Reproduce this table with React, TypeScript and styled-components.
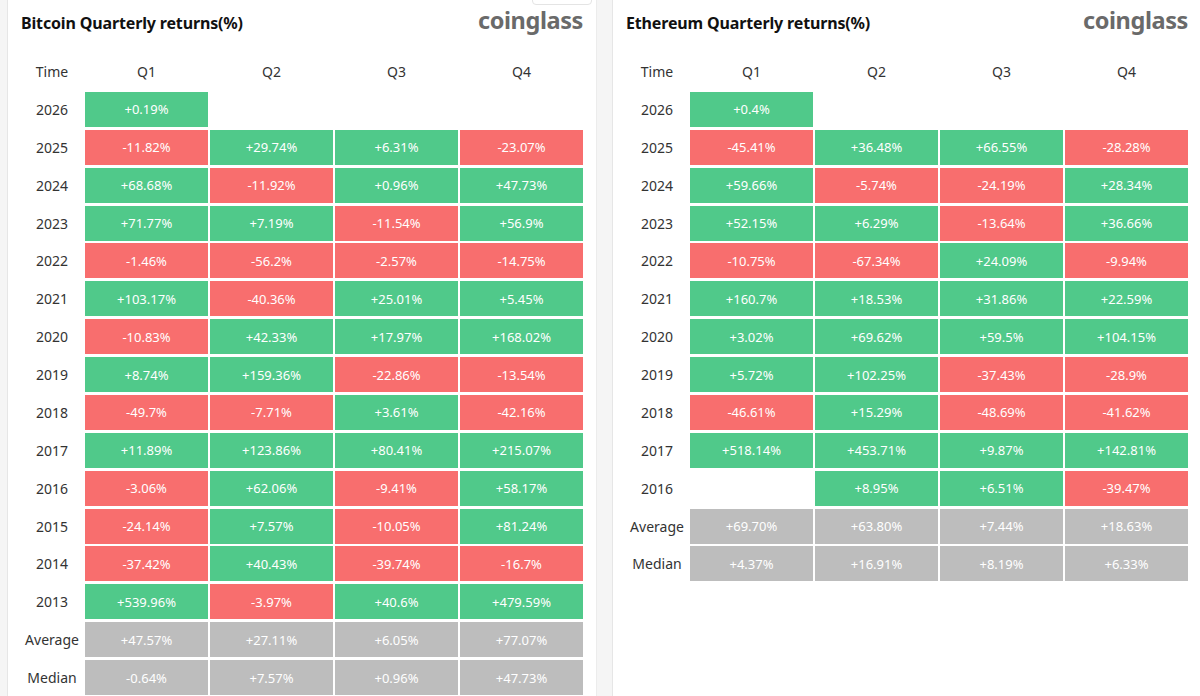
import React from "react";
import styled, { createGlobalStyle } from "styled-components";

const Global = createGlobalStyle`
  html, body { margin: 0; padding: 0; height: 100%; overflow: hidden; background: #f5f5f5; }
  #root { height: 100%; }
`;

type Row = { label: string; values: (string | null)[]; summary?: boolean };

const btc: Row[] = [
  { label: "2026", values: ["+0.19%", null, null, null] },
  { label: "2025", values: ["-11.82%", "+29.74%", "+6.31%", "-23.07%"] },
  { label: "2024", values: ["+68.68%", "-11.92%", "+0.96%", "+47.73%"] },
  { label: "2023", values: ["+71.77%", "+7.19%", "-11.54%", "+56.9%"] },
  { label: "2022", values: ["-1.46%", "-56.2%", "-2.57%", "-14.75%"] },
  { label: "2021", values: ["+103.17%", "-40.36%", "+25.01%", "+5.45%"] },
  { label: "2020", values: ["-10.83%", "+42.33%", "+17.97%", "+168.02%"] },
  { label: "2019", values: ["+8.74%", "+159.36%", "-22.86%", "-13.54%"] },
  { label: "2018", values: ["-49.7%", "-7.71%", "+3.61%", "-42.16%"] },
  { label: "2017", values: ["+11.89%", "+123.86%", "+80.41%", "+215.07%"] },
  { label: "2016", values: ["-3.06%", "+62.06%", "-9.41%", "+58.17%"] },
  { label: "2015", values: ["-24.14%", "+7.57%", "-10.05%", "+81.24%"] },
  { label: "2014", values: ["-37.42%", "+40.43%", "-39.74%", "-16.7%"] },
  { label: "2013", values: ["+539.96%", "-3.97%", "+40.6%", "+479.59%"] },
  { label: "Average", values: ["+47.57%", "+27.11%", "+6.05%", "+77.07%"], summary: true },
  { label: "Median", values: ["-0.64%", "+7.57%", "+0.96%", "+47.73%"], summary: true },
];

const eth: Row[] = [
  { label: "2026", values: ["+0.4%", null, null, null] },
  { label: "2025", values: ["-45.41%", "+36.48%", "+66.55%", "-28.28%"] },
  { label: "2024", values: ["+59.66%", "-5.74%", "-24.19%", "+28.34%"] },
  { label: "2023", values: ["+52.15%", "+6.29%", "-13.64%", "+36.66%"] },
  { label: "2022", values: ["-10.75%", "-67.34%", "+24.09%", "-9.94%"] },
  { label: "2021", values: ["+160.7%", "+18.53%", "+31.86%", "+22.59%"] },
  { label: "2020", values: ["+3.02%", "+69.62%", "+59.5%", "+104.15%"] },
  { label: "2019", values: ["+5.72%", "+102.25%", "-37.43%", "-28.9%"] },
  { label: "2018", values: ["-46.61%", "+15.29%", "-48.69%", "-41.62%"] },
  { label: "2017", values: ["+518.14%", "+453.71%", "+9.87%", "+142.81%"] },
  { label: "2016", values: [null, "+8.95%", "+6.51%", "-39.47%"] },
  { label: "Average", values: ["+69.70%", "+63.80%", "+7.44%", "+18.63%"], summary: true },
  { label: "Median", values: ["+4.37%", "+16.91%", "+8.19%", "+6.33%"], summary: true },
];

const Page = styled.div`
  display: flex;
  gap: 15px;
  padding-left: 7px;
  height: 100%;
  align-items: flex-start;
`;

const Panel = styled.section`
  position: relative;
  flex: 0 0 590px;
  background: #fff;
  border-left: 1px solid #e6e6e6;
  border-right: 1px solid #ececec;
  padding: 0 13px;
  height: 760px;
  box-sizing: border-box;
`;

const Header = styled.header`
  display: flex;
  align-items: center;
  justify-content: space-between;
  height: 54px;
  padding-bottom: 10px;
  box-sizing: border-box;
`;

const Title = styled.h2`
  margin: 0;
  margin-top: 1px;
  font-family: "Noto Sans", sans-serif;
  font-weight: 700;
  font-size: 16px;
  color: #111;
  letter-spacing: -0.15px;
`;

const Logo = styled.span`
  font-family: "Noto Sans", sans-serif;
  font-weight: 700;
  font-size: 23.5px;
  color: #6a6a6a;
  letter-spacing: -0.4px;
  line-height: 1;
  margin-top: -2px;
`;

const Grid = styled.div`
  display: grid;
  grid-template-columns: 62px repeat(4, 123px);
  grid-auto-rows: 35px;
  column-gap: 2px;
  row-gap: 2.88px;
`;

const Label = styled.div`
  display: flex;
  align-items: center;
  justify-content: center;
  font-family: "Noto Sans", sans-serif;
  font-size: 14px;
  color: #333;
`;

type Tone = "pos" | "neg" | "sum" | "none";
const toneColor: Record<Tone, string> = {
  pos: "#50c98a",
  neg: "#f86e6e",
  sum: "#bdbdbd",
  none: "transparent",
};

const Cell = styled.div<{ $tone: Tone }>`
  display: flex;
  align-items: center;
  justify-content: center;
  background: ${(p) => toneColor[p.$tone]};
  color: #fff;
  font-family: "Noto Sans", sans-serif;
  font-size: 13px;
`;

const TopTab = styled.div`
  position: absolute;
  right: 4px;
  top: -20px;
  width: 58px;
  height: 23px;
  border: 1px solid #e4e4e4;
  border-radius: 4px;
  background: #fff;
`;

function Table({ title, rows }: { title: string; rows: Row[] }) {
  return (
    <>
      <Header>
        <Title>{title}</Title>
        <Logo>coinglass</Logo>
      </Header>
      <Grid>
        <Label>Time</Label>
        <Label>Q1</Label>
        <Label>Q2</Label>
        <Label>Q3</Label>
        <Label>Q4</Label>
        {rows.map((r) => (
          <React.Fragment key={r.label}>
            <Label>{r.label}</Label>
            {r.values.map((v, i) => {
              const tone: Tone = v == null ? "none" : r.summary ? "sum" : v.startsWith("-") ? "neg" : "pos";
              return (
                <Cell key={i} $tone={tone}>
                  {v}
                </Cell>
              );
            })}
          </React.Fragment>
        ))}
      </Grid>
    </>
  );
}

export default function App() {
  return (
    <Page>
      <Global />
      <Panel>
        <TopTab />
        <Table title="Bitcoin Quarterly returns(%)" rows={btc} />
      </Panel>
      <Panel>
        <Table title="Ethereum Quarterly returns(%)" rows={eth} />
      </Panel>
    </Page>
  );
}
